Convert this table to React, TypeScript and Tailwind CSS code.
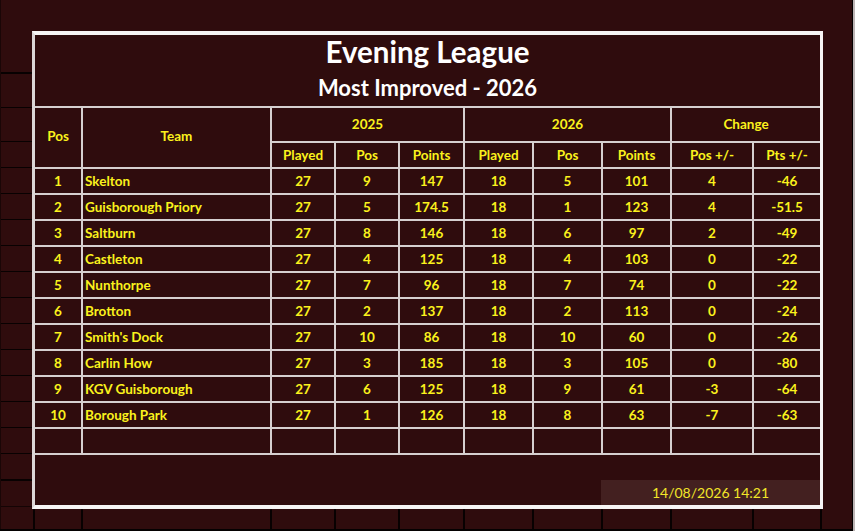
import React from "react";

type Row = [number, string, number, number, number, number, number, number, number, number];

const rows: Row[] = [
  [1, "Skelton", 27, 9, 147, 18, 5, 101, 4, -46],
  [2, "Guisborough Priory", 27, 5, 174.5, 18, 1, 123, 4, -51.5],
  [3, "Saltburn", 27, 8, 146, 18, 6, 97, 2, -49],
  [4, "Castleton", 27, 4, 125, 18, 4, 103, 0, -22],
  [5, "Nunthorpe", 27, 7, 96, 18, 7, 74, 0, -22],
  [6, "Brotton", 27, 2, 137, 18, 2, 113, 0, -24],
  [7, "Smith's Dock", 27, 10, 86, 18, 10, 60, 0, -26],
  [8, "Carlin How", 27, 3, 185, 18, 3, 105, 0, -80],
  [9, "KGV Guisborough", 27, 6, 125, 18, 9, 61, -3, -64],
  [10, "Borough Park", 27, 1, 126, 18, 8, 63, -7, -63],
];

const cell = "bg-[#2f0c0d] flex items-center justify-center";

function LeftStrip() {
  return (
    <div className="w-[32px] shrink-0 flex flex-col border-l border-[#1a0606]">
      <div className="h-[74px] border-b-2 border-[#080101]" />
      <div className="h-[34px] border-b border-[#080101]" />
      <div className="h-[34px] border-b border-[#080101]" />
      {Array.from({ length: 12 }).map((_, i) => (
        <div key={i} className="h-[26px] border-b border-[#080101]" />
      ))}
      <div className="h-[27px] border-b-2 border-[#080101]" />
      <div className="h-[26px] border-b border-[#140404]" />
    </div>
  );
}

function BottomStrip() {
  return (
    <div className="h-[22px] flex border-b-2 border-[#050101]">
      <div className="w-[35px] border-l border-[#1a0606] border-r-2 border-r-[#080101]" />
      <div className="w-[48px] border-r-2 border-[#080101]" />
      <div className="w-[189px] border-r-2 border-[#080101]" />
      <div className="w-[64px] border-r-2 border-[#080101]" />
      <div className="w-[64px] border-r-2 border-[#080101]" />
      <div className="w-[65px] border-r-2 border-[#080101]" />
      <div className="w-[69px] border-r-2 border-[#080101]" />
      <div className="w-[69px] border-r-2 border-[#080101]" />
      <div className="w-[69px] border-r-2 border-[#080101]" />
      <div className="w-[82px] border-r-2 border-[#080101]" />
      <div className="w-[68px] border-r-2 border-[#080101]" />
      <div className="flex-1" />
    </div>
  );
}

export default function App() {
  return (
    <div className="w-[855px] h-[531px] bg-[#2f0c0d] flex overflow-hidden font-[family-name:Lato,'Open_Sans',sans-serif]">
      <div className="w-[852px] flex flex-col">
        <div className="h-[509px] flex">
          <LeftStrip />
          <div className="mt-[31px] h-[478px] w-[791px] shrink-0 border-t-4 border-b-4 border-r-[3px] border-l-[3px] border-[#f7f5f5] border-l-[#dcd6d6] flex flex-col">
            <div className="h-[71px] flex flex-col items-center text-white font-bold">
              <div className="pt-[0px] text-[29.5px] leading-[34px]">Evening League</div>
              <div className="mt-[6px] text-[22px] leading-[26px]">Most Improved - 2026</div>
            </div>
            <div className="h-[349px] grid grid-cols-[46px_187px_62px_62px_63px_67px_67px_67px_80px_66px] grid-rows-[33px_24px_repeat(11,24px)] gap-[2px] py-[2px] bg-[#d6d0d0] text-[13.5px] font-bold text-[#fbf21c]">
              <div className={`${cell} row-span-2 pb-[2px]`}>Pos</div>
              <div className={`${cell} row-span-2 pb-[2px]`}>Team</div>
              <div className={`${cell} col-span-3`}>2025</div>
              <div className={`${cell} col-span-3`}>2026</div>
              <div className={`${cell} col-span-2`}>Change</div>
              <div className={cell}>Played</div>
              <div className={cell}>Pos</div>
              <div className={cell}>Points</div>
              <div className={cell}>Played</div>
              <div className={cell}>Pos</div>
              <div className={cell}>Points</div>
              <div className={cell}>Pos +/-</div>
              <div className={cell}>Pts +/-</div>
              {rows.map((r) => (
                <React.Fragment key={r[0]}>
                  <div className={`${cell} pt-px`}>{r[0]}</div>
                  <div className="bg-[#2f0c0d] flex items-center pl-[2px] pt-px">{r[1]}</div>
                  <div className={`${cell} pt-px`}>{r[2]}</div>
                  <div className={`${cell} pt-px`}>{r[3]}</div>
                  <div className={`${cell} pt-px`}>{r[4]}</div>
                  <div className={`${cell} pt-px`}>{r[5]}</div>
                  <div className={`${cell} pt-px`}>{r[6]}</div>
                  <div className={`${cell} pt-px`}>{r[7]}</div>
                  <div className={`${cell} pt-px`}>{r[8]}</div>
                  <div className={`${cell} pt-px`}>{r[9]}</div>
                </React.Fragment>
              ))}
              {Array.from({ length: 10 }).map((_, i) => (
                <div key={`e${i}`} className={cell} />
              ))}
            </div>
            <div className="flex-1 flex items-end justify-end">
              <div className="w-[219px] h-[25px] bg-[#432020] flex items-center justify-center text-[14px] text-[#f2e628] font-normal">
                14/08/2026 14:21
              </div>
            </div>
          </div>
          <div className="flex-1" />
        </div>
        <BottomStrip />
      </div>
      <div className="w-px bg-[#050101]" />
      <div className="w-[2px] bg-[#bdb5b5]" />
    </div>
  );
}
